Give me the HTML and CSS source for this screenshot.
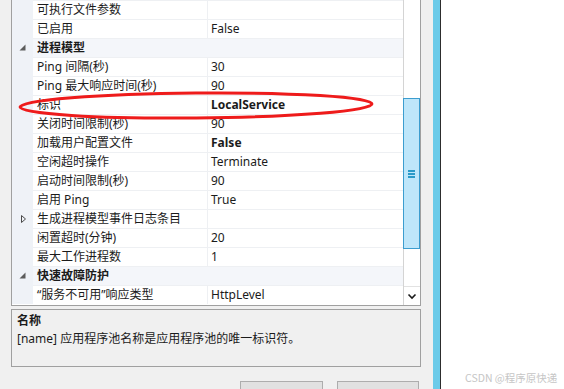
FILE: index.html
```html
<!DOCTYPE html>
<html lang="zh-CN">

<head>
    <meta charset="UTF-8">
    <title>应用程序池高级设置</title>
    <link rel="stylesheet" href="styles.css">
</head>

<body>

    <div class="window">
        <div class="dialog">
            <!-- property grid -->
            <div class="grid">
                <div class="rows">
                    <div class="row">
                        <div class="gutter"></div>
                        <div class="name">可执行文件参数</div>
                        <div class="value"></div>
                    </div>
                    <div class="row">
                        <div class="gutter"></div>
                        <div class="name">已启用</div>
                        <div class="value">False</div>
                    </div>
                    <div class="row category">
                        <div class="gutter">
                            <svg class="toggle" width="21" height="19" viewBox="0 0 21 19">
                                <polygon points="13.5,6.5 13.5,12.5 7.5,12.5" fill="#5c5c5c" />
                            </svg>
                        </div>
                        <div class="name">进程模型</div>
                        <div class="value"></div>
                    </div>
                    <div class="row">
                        <div class="gutter"></div>
                        <div class="name">Ping 间隔(秒)</div>
                        <div class="value">30</div>
                    </div>
                    <div class="row">
                        <div class="gutter"></div>
                        <div class="name">Ping 最大响应时间(秒)</div>
                        <div class="value">90</div>
                    </div>
                    <div class="row">
                        <div class="gutter"></div>
                        <div class="name">标识</div>
                        <div class="value bold">LocalService</div>
                    </div>
                    <div class="row">
                        <div class="gutter"></div>
                        <div class="name">关闭时间限制(秒)</div>
                        <div class="value">90</div>
                    </div>
                    <div class="row">
                        <div class="gutter"></div>
                        <div class="name">加载用户配置文件</div>
                        <div class="value bold">False</div>
                    </div>
                    <div class="row">
                        <div class="gutter"></div>
                        <div class="name">空闲超时操作</div>
                        <div class="value">Terminate</div>
                    </div>
                    <div class="row">
                        <div class="gutter"></div>
                        <div class="name">启动时间限制(秒)</div>
                        <div class="value">90</div>
                    </div>
                    <div class="row">
                        <div class="gutter"></div>
                        <div class="name">启用 Ping</div>
                        <div class="value">True</div>
                    </div>
                    <div class="row">
                        <div class="gutter">
                            <svg class="toggle" width="21" height="19" viewBox="0 0 21 19">
                                <polygon points="9.5,6.5 13.5,10 9.5,13.5" fill="none" stroke="#4a4a4a" stroke-width="1" />
                            </svg>
                        </div>
                        <div class="name">生成进程模型事件日志条目</div>
                        <div class="value"></div>
                    </div>
                    <div class="row">
                        <div class="gutter"></div>
                        <div class="name">闲置超时(分钟)</div>
                        <div class="value">20</div>
                    </div>
                    <div class="row">
                        <div class="gutter"></div>
                        <div class="name">最大工作进程数</div>
                        <div class="value">1</div>
                    </div>
                    <div class="row category">
                        <div class="gutter">
                            <svg class="toggle" width="21" height="19" viewBox="0 0 21 19">
                                <polygon points="13.5,6.5 13.5,12.5 7.5,12.5" fill="#5c5c5c" />
                            </svg>
                        </div>
                        <div class="name">快速故障防护</div>
                        <div class="value"></div>
                    </div>
                    <div class="row">
                        <div class="gutter"></div>
                        <div class="name">“服务不可用”响应类型</div>
                        <div class="value">HttpLevel</div>
                    </div>
                </div>

                <!-- vertical scrollbar -->
                <div class="scrollbar">
                    <div class="track-top"></div>
                    <div class="thumb">
                        <span class="grip"></span>
                        <span class="grip"></span>
                        <span class="grip"></span>
                    </div>
                    <div class="track-bottom"></div>
                    <div class="arrow-down">
                        <svg width="16" height="18" viewBox="0 0 16 18">
                            <polyline points="4.5,7.5 8,11 11.5,7.5" fill="none" stroke="#1a1a1a" stroke-width="1.6" />
                        </svg>
                    </div>
                </div>
            </div>

            <!-- description panel -->
            <div class="description">
                <div class="desc-title">名称</div>
                <div class="desc-text">[name] 应用程序池名称是应用程序池的唯一标识符。</div>
            </div>

            <div class="buttons">
                <button class="btn btn-ok"></button>
                <button class="btn btn-cancel"></button>
            </div>
        </div>
        <div class="edge"></div>
    </div>

    <!-- red highlight drawn over the grid -->
    <svg class="highlight" width="564" height="389" viewBox="0 0 564 389">
        <ellipse cx="196" cy="105.5" rx="176" ry="12.5" transform="rotate(-0.5 196 105.5)"
            fill="none" stroke="#ee1b1b" stroke-width="3" />
    </svg>

    <div class="watermark">CSDN @程序原快递</div>

</body>

</html>
```

FILE: styles.css
```css
body {
    margin: 0;
    padding: 0;
    width: 564px;
    height: 389px;
    overflow: hidden;
    background: #ffffff;
    font-family: "Noto Sans", "Noto Sans CJK SC", sans-serif;
    font-size: 12px;
    color: #1b1b1b;
    position: relative;
}

.window {
    display: flex;
    height: 389px;
}

.dialog {
    width: 433px;
    box-sizing: border-box;
    padding-left: 11px;
    background: #f0f0f0;
}

.edge {
    width: 7px;
    background: #6ccbe9;
    border-right: 1px solid #2d2d2d;
}

/* Property grid */
.grid {
    display: flex;
    width: 410px;
    height: 306px;
    box-sizing: border-box;
    border: 1px solid #a0a0a0;
    border-top: none;
    background: #ffffff;
}

.rows {
    width: 391px;
}

.row {
    display: flex;
    height: 19px;
    line-height: 18px;
    white-space: nowrap;
}

.gutter {
    width: 21px;
    background: #eff2f7;
}

.toggle {
    display: block;
}

.name {
    width: 175px;
    box-sizing: border-box;
    padding-left: 4px;
    border-top: 1px solid #eef0f3;
    border-right: 1px solid #eef0f3;
    overflow: hidden;
}

.value {
    width: 195px;
    box-sizing: border-box;
    padding-left: 3px;
    border-top: 1px solid #eef0f3;
    overflow: hidden;
}

.bold {
    font-weight: bold;
}

.category .name,
.category .value {
    background: #f4f6fa;
    font-weight: bold;
    border-right: none;
}

/* Scrollbar */
.scrollbar {
    width: 17px;
    box-sizing: border-box;
    border-left: 1px solid #d4d4d4;
    display: flex;
    flex-direction: column;
    background: #ffffff;
}

.track-top {
    height: 98px;
}

.thumb {
    height: 151px;
    margin-left: -1px;
    box-sizing: border-box;
    border: 1px solid #3c9dcf;
    background: #bee6fa;
    display: flex;
    flex-direction: column;
    justify-content: center;
    align-items: center;
    gap: 1px;
}

.grip {
    display: block;
    width: 7px;
    height: 2px;
    background: #2a9ac8;
}

.track-bottom {
    flex: 1;
}

.arrow-down {
    height: 18px;
    border-top: 1px solid #e2e2e2;
}

.arrow-down svg {
    display: block;
}

/* Description panel */
.description {
    margin-top: 3px;
    width: 410px;
    height: 58px;
    box-sizing: border-box;
    border: 1px solid #a0a0a0;
    padding: 2px 5px;
    line-height: 18px;
}

.desc-title {
    font-weight: bold;
}

/* Dialog buttons (cut off at the bottom) */
.buttons {
    display: flex;
    justify-content: flex-end;
    gap: 14px;
    width: 410px;
    box-sizing: border-box;
    padding-right: 2px;
    margin-top: 14px;
}

.btn {
    height: 23px;
    border: 1px solid #adadad;
    background: #e1e1e1;
    padding: 0;
}

.btn-ok {
    width: 83px;
}

.btn-cancel {
    width: 82px;
}

.highlight {
    position: absolute;
    left: 0;
    top: 0;
    pointer-events: none;
}

.watermark {
    position: absolute;
    left: 465px;
    top: 371px;
    font-family: "Noto Sans CJK SC", sans-serif;
    font-size: 10.5px;
    line-height: 14px;
    color: #c6c6c6;
    white-space: nowrap;
}
```
